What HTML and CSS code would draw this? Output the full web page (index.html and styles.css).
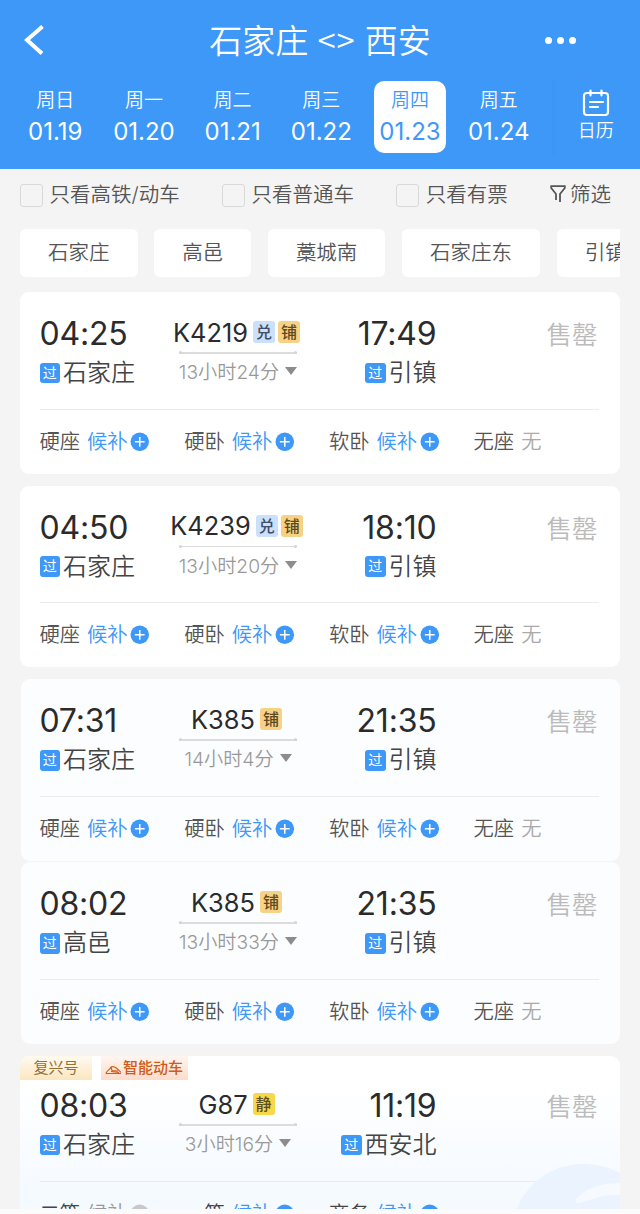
FILE: index.html
```html
<!DOCTYPE html>
<html lang="zh-CN">
<head>
  <meta charset="UTF-8" />
  <meta name="viewport" content="width=device-width, initial-scale=1.0"/>
  <title>石家庄 - 西安</title>
  <link rel="stylesheet" href="styles.css">
</head>
<body>
  <div class="screen">
    <header>
      <div class="title-bar">
        <svg class="back" viewBox="0 0 20 30"><path d="M18.5 1.5 L3 15 L18 28.5" /></svg>
        <h1>石家庄 <span>&lt;&gt;</span> 西安</h1>
        <div class="more"><i></i><i></i><i></i></div>
      </div>
      <div class="dates">
        <div class="day"><span>周日</span><b>01.19</b></div>
        <div class="day"><span>周一</span><b>01.20</b></div>
        <div class="day"><span>周二</span><b>01.21</b></div>
        <div class="day"><span>周三</span><b>01.22</b></div>
        <div class="day active"><span>周四</span><b>01.23</b></div>
        <div class="day"><span>周五</span><b>01.24</b></div>
        <div class="calendar">
          <svg viewBox="0 0 28 28">
            <rect x="2" y="4" width="24" height="22" rx="3" />
            <path d="M8.5 1.500v5M19.5 1.500v5M8 13h13M8 18h8" />
          </svg>
          <span>日历</span>
        </div>
      </div>
    </header>

    <div class="filters">
      <label><i class="box"></i>只看高铁/动车</label>
      <label><i class="box"></i>只看普通车</label>
      <label><i class="box"></i>只看有票</label>
      <div class="filter-btn">
        <svg viewBox="0 0 16 18"><path d="M6 15V9L1.200 3V1.200h13.600V3L10 9v8" /></svg>
        筛选
      </div>
    </div>

    <div class="chips">
      <span>石家庄</span><span>高邑</span><span>藁城南</span><span>石家庄东</span><span>引镇</span>
    </div>

    <main id="trains"></main>
  </div>

  <script>
    const sleeper = [["硬座", "候补"], ["硬卧", "候补"], ["软卧", "候补"], ["无座", "无"]];

    const trains = [
      { from: "石家庄", dep: "04:25", to: "引镇", arr: "17:49", no: "K4219", marks: ["兑", "铺"], cost: "13小时24分", seats: sleeper },
      { from: "石家庄", dep: "04:50", to: "引镇", arr: "18:10", no: "K4239", marks: ["兑", "铺"], cost: "13小时20分", seats: sleeper },
      { from: "石家庄", dep: "07:31", to: "引镇", arr: "21:35", no: "K385", marks: ["铺"], cost: "14小时4分", seats: sleeper, cls: "tinted joined" },
      { from: "高邑", dep: "08:02", to: "引镇", arr: "21:35", no: "K385", marks: ["铺"], cost: "13小时33分", seats: sleeper, cls: "tinted" },
      { from: "石家庄", dep: "08:03", to: "西安北", arr: "11:19", no: "G87", marks: ["静"], cost: "3小时16分",
        seats: [["二等", "候补", "off"], ["一等", "候补"], ["商务", "候补"]], cls: "smart" }
    ];

    const markClass = { "兑": "points", "铺": "berth", "静": "quiet" };

    const plus = `<svg class="plus" viewBox="0 0 20 20"><circle cx="10" cy="10" r="9.5"/><path d="M10 5v10M5 10h10"/></svg>`;

    const tags = `
      <div class="tags">
        <span class="fuxing">复兴号</span>
        <span class="emu"><svg viewBox="0 0 17 10"><path d="M1 8.500C1 6 5 5 6 2c3-1.500 7 2 10 5.500M6 2l1 3.500 6 .5M1 8.500h15M6 6.500l8 1" /></svg>智能动车</span>
      </div>`;

    const wave = `
      <svg class="wave" viewBox="0 0 104 48">
        <path class="w1" d="M0 48C10 20 38 0 68 1c14 0 27 4 36 9v38z" />
        <path class="w2" d="M62 34C72 24 86 20 104 20v12c-16-1-26 4-40 8q-8 0-2-6z" />
      </svg>`;

    function seat([name, state, off]) {
      const cls = state === "无" ? "none" : (off || "wait");
      return `<div class="seat">${name}<span class="${cls}">${state}</span>${state === "无" ? "" : plus}</div>`;
    }

    document.getElementById("trains").innerHTML = trains.map(t => `
      <section class="card ${t.cls || ""}">
        ${t.cls === "smart" ? tags + wave : ""}
        <div class="trip">
          <div class="stop">
            <div class="time">${t.dep}</div>
            <div class="station"><i>过</i>${t.from}</div>
          </div>
          <div class="train">
            <div class="number">${t.no}${t.marks.map(m => `<i class="${markClass[m]}">${m}</i>`).join("")}</div>
            <div class="line"></div>
            <div class="cost">${t.cost}<svg viewBox="0 0 12 8"><path d="M0 0h12L6 8z"/></svg></div>
          </div>
          <div class="stop end">
            <div class="time">${t.arr}</div>
            <div class="station"><i>过</i>${t.to}</div>
          </div>
          <div class="sold-out">售罄</div>
        </div>
        <div class="seats">${t.seats.map(seat).join("")}</div>
      </section>`).join("");
  </script>
</body>
</html>
```
FILE: styles.css
```css
* {
  box-sizing: border-box;
}

body {
  margin: 0;
  background: #fbfbfb;
  font-family: Inter, "Noto Sans CJK SC", sans-serif;
  font-weight: 350;
  color: #555;
}

i, b {
  font-style: normal;
  font-weight: inherit;
}

.screen {
  width: 640px;
  height: 1209px;
  overflow: hidden;
  background: #f4f4f4;
  box-shadow: 0 2px 0 #f1f1f1;
}

header {
  height: 169px;
  background: #3d98f8;
  color: #fff;
}

.title-bar {
  height: 81px;
  display: grid;
  grid-template-columns: 100px 1fr 100px;
  align-items: center;
}

.back {
  width: 20px;
  height: 30px;
  margin: 0 0 2px 24px;
  fill: none;
  stroke: #fff;
  stroke-width: 4;
}

h1 {
  margin: 0 0 1px;
  font-size: 33px;
  font-weight: 350;
  line-height: 48px;
  text-align: center;
  white-space: nowrap;
}

h1 span {
  font-family: "Noto Sans CJK SC", sans-serif;
  letter-spacing: 0.8px;
}

.more {
  display: flex;
  gap: 5px;
  margin: 0 0 1px 5px;
}

.more i {
  width: 7px;
  height: 7px;
  border-radius: 50%;
  background: #fff;
}

.dates {
  display: flex;
  padding-left: 19.500px;
}

.day {
  width: 71.500px;
  height: 71.500px;
  margin-right: 17.200px;
  border-radius: 10px;
  display: flex;
  flex-direction: column;
  align-items: center;
}

.day span {
  padding-top: 1px;
  font-size: 19px;
  line-height: 37px;
}

.day b {
  font-size: 24px;
  line-height: 26px;
  font-weight: 400;
}

.day.active {
  background: #fff;
  color: #3d98f8;
}

.calendar {
  flex: 1;
  height: 76px;
  display: flex;
  flex-direction: column;
  align-items: center;
  padding: 8px 0 0 0;
  background: linear-gradient(90deg, #3b95f5, #3d98f8 6px);
}

.calendar svg {
  width: 28px;
  height: 28px;
  fill: none;
  stroke: #fff;
  stroke-width: 2.2;
  stroke-linecap: round;
}

.calendar span {
  font-size: 18px;
  line-height: 28px;
}

.filters {
  height: 60px;
  padding: 0 29px 8px 20px;
  display: flex;
  justify-content: space-between;
  align-items: center;
  font-size: 20.500px;
  line-height: 30px;
}

.filters label,
.filter-btn {
  display: flex;
  align-items: center;
}

.box {
  width: 23px;
  height: 23px;
  margin-right: 6.500px;
  border: 1.500px solid #d9d9d9;
  border-radius: 3px;
}

.filter-btn svg {
  width: 16px;
  height: 18px;
  margin: 0 4px 3px 0;
  fill: none;
  stroke: #555;
  stroke-width: 1.8;
}

.chips {
  width: 600px;
  margin-left: 20px;
  display: flex;
  gap: 16.700px;
  overflow: hidden;
}

.chips span {
  flex: none;
  height: 48px;
  padding: 0 28px;
  border-radius: 6px;
  background: #fff;
  font-size: 20.500px;
  line-height: 48px;
}

#trains {
  padding: 15px 20px 0;
}

.card {
  position: relative;
  height: 181.500px;
  margin-bottom: 12.200px;
  padding: 0 21px 0 19.500px;
  border-radius: 9px;
  background: #fff;
  overflow: hidden;
}

.card.tinted {
  margin-left: 1px;
  padding-left: 18.500px;
  background: #fcfdff;
}

.card.joined {
  margin-bottom: 1.500px;
}

.card.smart {
  padding-top: 8px;
  background: linear-gradient(#fff 15%, #f5faff 75%);
}

.trip {
  height: 117.500px;
  display: flex;
  border-bottom: 1.500px solid #ececec;
}

.stop {
  width: 120px;
  padding-top: 21px;
}

.stop.end {
  width: 120px;
  text-align: right;
}

.time {
  font-size: 32px;
  line-height: 41px;
  font-weight: 430;
  color: #2b2b2b;
  letter-spacing: -0.2px;
}

.station {
  height: 38px;
  display: flex;
  align-items: center;
  gap: 3px;
  font-size: 24px;
  line-height: 36px;
  color: #444;
}

.end .station {
  justify-content: flex-end;
}

.station i {
  width: 20.500px;
  height: 20.500px;
  border-radius: 3px;
  background: #3d98f8;
  color: #fff;
  font-size: 14px;
  line-height: 20px;
  font-weight: 400;
  text-align: center;
}

.train {
  width: 157px;
  padding-top: 24px;
  display: flex;
  flex-direction: column;
  align-items: center;
}

.number {
  height: 32px;
  display: flex;
  align-items: center;
  font-size: 25.400px;
  font-weight: 430;
  color: #2b2b2b;
  white-space: nowrap;
  margin-right: 3px;
}

.number i {
  width: 22px;
  height: 22px;
  margin-left: 3px;
  border-radius: 3px;
  font-size: 16px;
  line-height: 22px;
  font-weight: 500;
  text-align: center;
}

.number i:first-of-type {
  margin-left: 5px;
}

.points {
  background: #cbe0fb;
  color: #3f4d66;
}

.berth {
  background: #f8d284;
  color: #5c4a22;
}

.quiet {
  background: #f7d84a;
  color: #5c5022;
}

.line {
  position: relative;
  width: 118px;
  height: 1.500px;
  margin-top: 4px;
  background: #dcdcdc;
}

.line::before,
.line::after {
  content: "";
  position: absolute;
  top: -1px;
  left: 0;
  width: 3px;
  height: 3px;
  border-radius: 50%;
  background: #d5d5d5;
}

.line::after {
  left: auto;
  right: 0;
}

.cost {
  height: 35px;
  display: flex;
  align-items: center;
  font-size: 19.200px;
  color: #999;
  white-space: nowrap;
}

.cost svg {
  width: 12px;
  height: 8px;
  margin-left: 6px;
  fill: #8c8c8c;
}

.sold-out {
  margin-left: auto;
  padding: 23px 1.500px 0 0;
  font-size: 25.500px;
  line-height: 40px;
  color: #bbb;
}

.seats {
  height: 64px;
  display: grid;
  grid-template-columns: repeat(4, 144.700px);
  align-items: center;
  font-size: 20.300px;
}

.seat {
  display: flex;
  align-items: center;
  line-height: 30px;
  white-space: nowrap;
}

.seat span {
  margin-left: 7px;
}

.wait {
  color: #3d98f8;
}

.none {
  color: #aaa;
}

.off {
  color: #999;
}

.plus {
  width: 19.500px;
  height: 19.500px;
  margin-left: 2.500px;
  fill: #3d98f8;
  stroke-width: 1.6;
}

.plus path {
  stroke: #fff;
}

.off + .plus {
  fill: #c8c8c8;
}

.smart .seats {
  color: #444;
}

.tags {
  position: absolute;
  top: 0;
  left: 0;
  display: flex;
  gap: 9px;
}

.tags span {
  height: 24px;
  display: flex;
  align-items: center;
  font-size: 15px;
  line-height: 22px;
}

.fuxing {
  width: 72px;
  justify-content: center;
  background: linear-gradient(#fffaf0, #fce6c0);
  color: #937234;
  font-weight: 400;
}

.emu {
  width: 87px;
  padding-left: 4px;
  background: linear-gradient(#fff5f0, #fcdccb);
  color: #cf5b16;
  font-weight: 500;
}

.emu svg {
  width: 17px;
  height: 10px;
  margin: 4px 1px 0 0;
  fill: none;
  stroke: #cf5b16;
  stroke-width: 1.1;
}

.wave {
  position: absolute;
  right: 0;
  top: 107px;
  width: 104px;
  height: 48px;
}

.w1 {
  fill: #eaf3fe;
}

.w2 {
  fill: #f6faff;
}
```
